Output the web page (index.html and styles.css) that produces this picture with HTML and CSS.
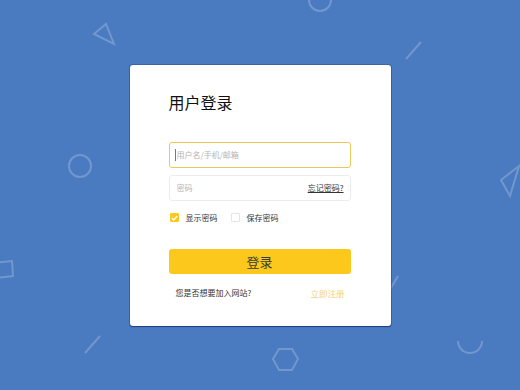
FILE: index.html
```html
<!DOCTYPE html>
<html lang="zh-CN">
<head>
  <meta charset="utf-8">
  <meta name="viewport" content="width=device-width, initial-scale=1">
  <title>用户登录</title>
  <link rel="stylesheet" href="styles.css">
</head>
<body>
  <!-- decorative outline shapes on the background -->
  <svg class="bg-shapes" width="520" height="390" viewBox="0 0 520 390">
    <g fill="none" stroke="rgba(255,255,255,0.22)" stroke-width="2">
      <polygon points="94,34 106,24 114,44"/>
      <circle cx="320" cy="0" r="11"/>
      <line x1="406" y1="59" x2="421" y2="42"/>
      <circle cx="80" cy="166" r="11"/>
      <polygon points="501,180 519,166 510,196"/>
      <polygon points="-6,263 12,261 13,276 -4,278"/>
      <line x1="85" y1="353" x2="100" y2="336"/>
      <polygon points="279,349 292,349 298,359 292,370 279,370 273,359"/>
      <path d="M458 341 A12 12 0 0 0 482 341"/>
      <line x1="386" y1="296" x2="398" y2="276"/>
    </g>
  </svg>

  <main class="login-card">
    <h1 class="login-title">用户登录</h1>

    <form class="login-form" onsubmit="return false">
      <div class="field field-active">
        <span class="caret"></span>
        <input type="text" placeholder="用户名/手机/邮箱">
      </div>

      <div class="field">
        <input type="password" placeholder="密码">
        <a href="#" class="forgot-link">忘记密码?</a>
      </div>

      <div class="option-row">
        <label class="check-item">
          <span class="check-box checked">
            <svg width="7" height="6" viewBox="0 0 7 6"><path d="M0.8 3 L2.8 5 L6.2 1" fill="none" stroke="#fff" stroke-width="1.2"/></svg>
          </span>
          显示密码
        </label>
        <label class="check-item">
          <span class="check-box"></span>
          保存密码
        </label>
      </div>

      <button type="submit" class="login-button">登录</button>

      <div class="register-row">
        <span>您是否想要加入网站?</span>
        <a href="#" class="register-link">立即注册</a>
      </div>
    </form>
  </main>
</body>
</html>
```

FILE: styles.css
```css
:root {
  --bg-color: #4a7ac0;
  --accent: #fbc81b;
  --text-color: #333333;
  --placeholder: #b4b4b4;
  --border-color: #ececec;
}

* {
  margin: 0;
  padding: 0;
  box-sizing: border-box;
}

body {
  font-family: "Noto Sans CJK SC", "Noto Sans", sans-serif;
  background-color: var(--bg-color);
  width: 520px;
  height: 390px;
  overflow: hidden;
  display: flex;
  align-items: center;
  justify-content: center;
  position: relative;
}

.bg-shapes {
  position: absolute;
  left: 0;
  top: 0;
}

.login-card {
  position: relative;
  width: 261px;
  height: 261px;
  background: #fff;
  border-radius: 3px;
  padding: 27px 40px 0 39px;
  box-shadow: 0 1px 1px #1c3f80, 0 0 0 1px rgba(30, 60, 120, 0.35);
}

.login-title {
  font-size: 16px;
  line-height: 20px;
  font-weight: 400;
  color: #111;
}

.login-form {
  margin-top: 30px;
}

.field {
  position: relative;
  height: 26px;
  border: 1px solid var(--border-color);
  border-radius: 3px;
  display: flex;
  align-items: center;
  padding: 0 6px 0 7px;
  margin-bottom: 7px;
}

.field-active {
  border-color: #e8c95a;
  padding-left: 5px;
}

.caret {
  width: 1px;
  height: 12px;
  background: #777;
  margin-right: 1px;
}

.field input {
  flex: 1 1 0;
  width: 0;
  min-width: 0;
  border: none;
  outline: none;
  background: none;
  font-family: inherit;
  font-size: 8px;
  color: var(--text-color);
}

.field input::placeholder {
  color: var(--placeholder);
}

.forgot-link {
  flex: none;
  font-size: 8px;
  color: var(--text-color);
  text-decoration: underline;
}

.option-row {
  display: flex;
  gap: 13px;
  height: 12px;
  margin-top: 11px;
  padding-left: 1px;
}

.check-item {
  display: flex;
  align-items: center;
  gap: 7px;
  font-size: 8px;
  color: var(--text-color);
}

.check-box {
  width: 9px;
  height: 9px;
  border: 1px solid #e4e4e4;
  border-radius: 1px;
  display: flex;
  align-items: center;
  justify-content: center;
}

.check-box.checked {
  background: var(--accent);
  border-color: var(--accent);
}

.login-button {
  display: block;
  width: 100%;
  height: 25px;
  margin-top: 25px;
  border: none;
  border-radius: 3px;
  background: var(--accent);
  color: #3a3a3a;
  font-family: inherit;
  font-size: 13px;
  cursor: pointer;
}

.register-row {
  display: flex;
  justify-content: space-between;
  align-items: center;
  height: 12px;
  margin-top: 13px;
  padding: 0 6px 0 7px;
  font-size: 8px;
  color: var(--text-color);
}

.register-link {
  font-size: 8.5px;
  color: #f3d27c;
  text-decoration: none;
}
```
